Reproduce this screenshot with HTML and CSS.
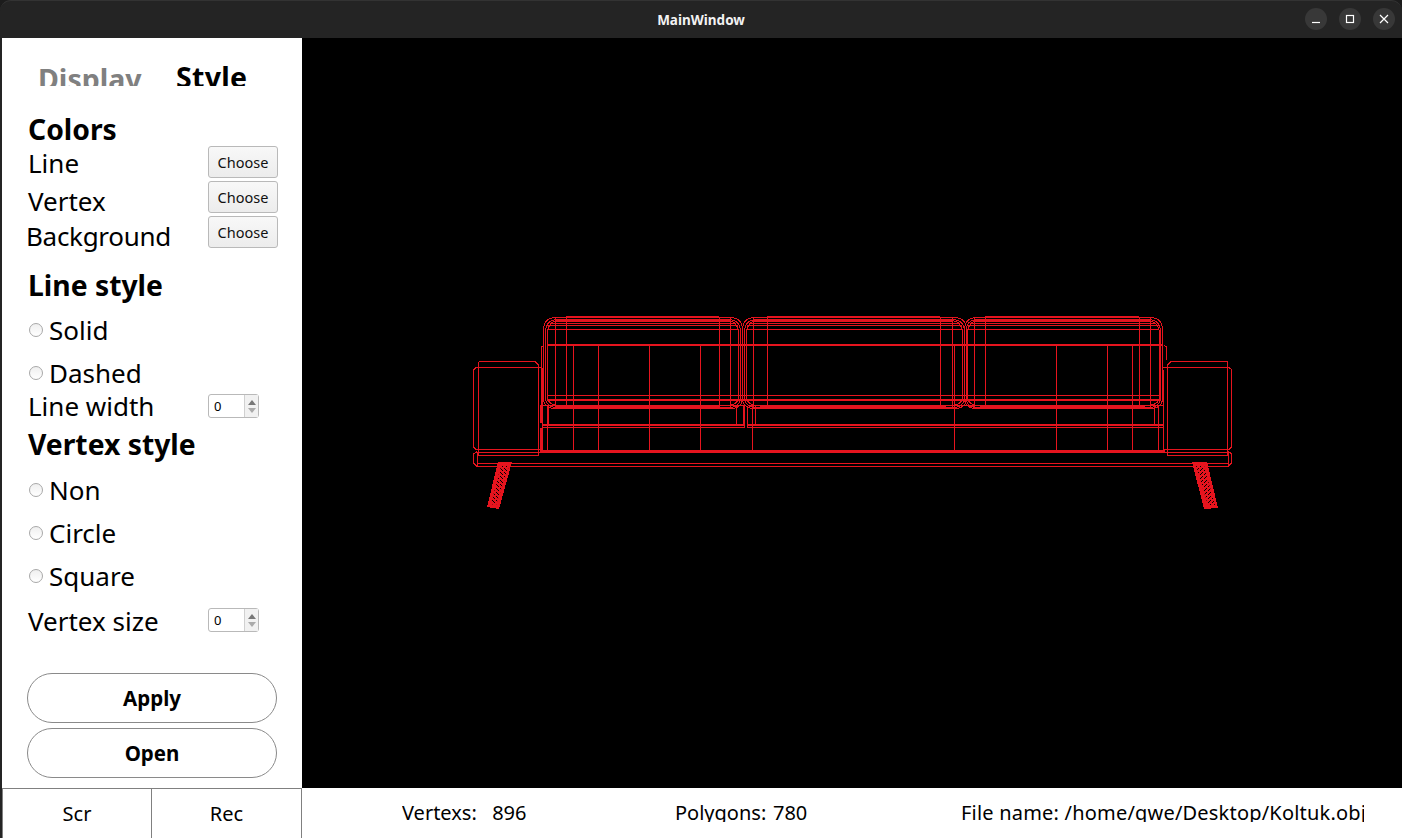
FILE: index.html
```html
<!DOCTYPE html>
<html lang="en">
<head>
<meta charset="utf-8">
<title>MainWindow</title>
<link rel="stylesheet" href="styles.css">
</head>
<body>
<div class="window">
  <header class="titlebar">
    <span class="title">MainWindow</span>
    <div class="wm">
      <span class="wm-btn"><svg width="12" height="12" viewBox="0 0 12 12"><path class="wm-ico" d="M2 9.5H10"/></svg></span>
      <span class="wm-btn"><svg width="12" height="12" viewBox="0 0 12 12"><rect class="wm-ico" x="2.5" y="2.5" width="7" height="7"/></svg></span>
      <span class="wm-btn"><svg width="12" height="12" viewBox="0 0 12 12"><path class="wm-ico" d="M2 2L10 10M10 2L2 10"/></svg></span>
    </div>
  </header>
  <main class="body">
    <aside class="panel">
      <div class="tabs">
        <span class="tab tab-off">Display</span>
        <span class="tab tab-on">Style</span>
      </div>
      <h2 class="heading">Colors</h2>
      <div class="row row-color"><span class="label l-1">Line</span><button class="choose">Choose</button></div>
      <div class="row row-color"><span class="label l-4">Vertex</span><button class="choose">Choose</button></div>
      <div class="row row-color"><span class="label l-4 l-out">Background</span><button class="choose">Choose</button></div>
      <h2 class="heading h-line">Line style</h2>
      <div class="radio m-11"><i class="dot"></i><span class="label">Solid</span></div>
      <div class="radio m-9"><i class="dot"></i><span class="label">Dashed</span></div>
      <div class="row row-spin"><span class="label">Line width</span><div class="spin"><span class="spin-val">0</span><span class="spin-btns"><i class="up"></i><i class="down"></i></span></div></div>
      <h2 class="heading h-vertex">Vertex style</h2>
      <div class="radio m-12"><i class="dot"></i><span class="label">Non</span></div>
      <div class="radio m-9"><i class="dot"></i><span class="label">Circle</span></div>
      <div class="radio m-9"><i class="dot"></i><span class="label">Square</span></div>
      <div class="row row-spin m-11"><span class="label l-low">Vertex size</span><div class="spin"><span class="spin-val">0</span><span class="spin-btns"><i class="up"></i><i class="down"></i></span></div></div>
      <button class="pill pill-apply">Apply</button>
      <button class="pill pill-open">Open</button>
    </aside>
    <section class="canvas">
      <svg class="model" viewBox="302 38 1100 750" aria-label="Sofa wireframe">
        <defs>
          <pattern id="hatch-l" width="4" height="4" patternUnits="userSpaceOnUse"><path class="tick" d="M0 0L3 3"/></pattern>
          <pattern id="hatch-r" width="4" height="4" patternUnits="userSpaceOnUse"><path class="tick" d="M3 0L0 3"/></pattern>
        </defs>
        <!-- armrests -->
        <path class="w" d="M473.5 370L476 367.5H542M473.5 370V447L476 449.5H542V370"/>
        <path class="w" d="M478.5 361.5H535L538.5 365V455.5H478.5V361.5"/>
        <path class="w" d="M476 452.5H540"/>
        <path class="w" d="M1232 370L1229 367.5H1163M1231.5 370V447L1229 449.5H1163V370"/>
        <path class="w" d="M1227.5 361.5H1171L1167.5 365V455.5H1227.5V361.5"/>
        <path class="w" d="M1165 452.5H1231"/>
        <!-- back frame -->
        <path class="w" d="M541.5 368V347L544 345M1166.5 360V347L1164 345"/>
        <path class="b2" d="M542 368V405M541 405V423M541 428V451"/>
        <!-- cushions -->
        <path class="w" d="M543.5 398V330Q543.5 317.5 556 317.5H730Q742.5 317.5 742.5 330V398Q742.5 408.5 730 408.5H556Q543.5 408.5 543.5 398Z"/>
        <path class="w" d="M545.5 397V332Q545.5 319.5 558 319.5H728Q740.5 319.5 740.5 332V397Q740.5 407.5 728 407.5H558Q545.5 407.5 545.5 397Z"/>
        <path class="w" d="M547.5 396V334Q547.5 320.5 560 320.5H726Q738.5 320.5 738.5 334V396Q738.5 405.5 726 405.5H560Q547.5 405.5 547.5 396Z"/>
        <path class="w" d="M555.5 317V408M566.5 317V408M719.5 317V408M730.5 317V408"/>
        <path class="w" d="M742.5 398V330Q742.5 317.5 755 317.5H954Q966.5 317.5 966.5 330V398Q966.5 408.5 954 408.5H755Q742.5 408.5 742.5 398Z"/>
        <path class="w" d="M744.5 397V332Q744.5 319.5 757 319.5H952Q964.5 319.5 964.5 332V397Q964.5 407.5 952 407.5H757Q744.5 407.5 744.5 397Z"/>
        <path class="w" d="M746.5 396V334Q746.5 320.5 759 320.5H950Q962.5 320.5 962.5 334V396Q962.5 405.5 950 405.5H759Q746.5 405.5 746.5 396Z"/>
        <path class="w" d="M753.5 317V408M767.5 317V408M940.5 317V408M952.5 317V408"/>
        <path class="w" d="M964.5 398V330Q964.5 317.5 977 317.5H1150Q1162.5 317.5 1162.5 330V398Q1162.5 408.5 1150 408.5H977Q964.5 408.5 964.5 398Z"/>
        <path class="w" d="M966 397V332Q966 319.5 978 319.5H1148Q1160.5 319.5 1160.5 332V397Q1160.5 407.5 1148 407.5H978Q966 407.5 966 397Z"/>
        <path class="w" d="M967.5 396V334Q967.5 320.5 980 320.5H1146Q1159.5 320.5 1159.5 334V396Q1159.5 405.5 1146 405.5H980Q967.5 405.5 967.5 396Z"/>
        <path class="w" d="M974.5 317V408M985.5 317V408M1139.5 317V408M1150.5 317V408"/>
        <!-- cushion horizontals -->
        <path class="b2" d="M566 317H719M767 317H940M985 317H1139"/>
        <path class="b3" d="M555 320H730M753 320H952M974 320H1150"/>
        <path class="w" d="M550 323.5H736M750 323.5H958M971 323.5H1155M547 325.5H738M747 325.5H962M968 325.5H1159M547 329.5H738M747 329.5H962M968 329.5H1159"/>
        <path class="b2" d="M547 345H1162"/>
        <path class="w" d="M547 395.5H1160"/>
        <path class="b2" d="M547 400H1160"/>
        <path class="b4" d="M555 407H720M760 407H946M980 407H1145"/>
        <!-- seat -->
        <path class="w" d="M543 405.5H744.5V427.5H543M747.5 405.5H1163V427.5H747.5V405.5"/>
        <path class="b2" d="M543 425H744M747 425H1163"/>
        <path class="w" d="M548.5 405V425M736.5 405V425M743.5 405V425M752.5 405V425M755.5 405V425M1154.5 405V425M1158.5 405V425"/>
        <!-- lower verticals -->
        <path class="w" d="M573.5 345V451M598.5 345V451M649.5 345V451M700.5 345V451M752.5 425V451M954.5 345V451M1056.5 345V451M1107.5 345V451M1132.5 345V451M547.5 405V451M1158.5 425V451"/>
        <!-- base -->
        <path class="b3" d="M540 451.5H1165"/>
        <path class="w" d="M477 451.5L473.5 454V463L477 466.5H1228L1231.5 463V454L1228 451.5M477 463.5H1228M477 451.5V466M1228 451.5V466"/>
        <!-- legs -->
        <path class="leg" d="M498 462H512L499 509L487 507Z"/>
        <path class="hatch-l" d="M501 466H509L496 505L491 504Z"/>
        <path class="leg" d="M1192 462H1207L1218 508L1204 509Z"/>
        <path class="hatch-r" d="M1196 466H1204L1215 505L1208 505Z"/>
      </svg>
    </section>
  </main>
  <footer class="status">
    <div class="shots">
      <button class="shot shot-scr">Scr</button>
      <button class="shot shot-last">Rec</button>
    </div>
    <div class="stat stat-v">Vertexs:&nbsp; 896</div>
    <div class="stat stat-p">Polygons: 780</div>
    <div class="stat stat-f">File name: /home/qwe/Desktop/Koltuk.obj</div>
  </footer>
</div>
</body>
</html>
```
FILE: styles.css
```css
* { box-sizing: border-box; }
html, body { margin: 0; padding: 0; height: 100%; background: #1c1c1c; overflow: hidden; }
body { font-family: "Noto Sans", "Open Sans", sans-serif; color: #000; }
.window { width: 1402px; height: 838px; display: flex; flex-direction: column; padding-left: 2px; background: #242424; border-radius: 11px 11px 0 0; border-top: 1px solid #333; }

.titlebar { height: 37px; flex: none; margin-left: -2px; display: flex; align-items: center; justify-content: center; position: relative; }
.title { color: #f2f2f2; font-size: 13.5px; font-weight: 700; }
.wm { position: absolute; right: 7px; top: 7px; display: flex; gap: 12px; }
.wm-btn { width: 22px; height: 22px; border-radius: 50%; background: #383838; display: flex; align-items: center; justify-content: center; }
.wm-ico { fill: none; stroke: #fff; stroke-width: 1.2; }

.body { flex: 1; display: flex; min-height: 0; }
.panel { width: 300px; flex: none; background: #fff; display: flex; flex-direction: column; padding-left: 26px; }

.tabs { height: 74px; flex: none; display: flex; padding-top: 20px; margin-left: 10px; }
.tab { font-size: 28.5px; font-weight: 700; line-height: 38px; height: 28px; overflow: hidden; }
.tab-off { color: #808080; width: 138px; padding-top: 2px; }
.tab-on { color: #000; letter-spacing: 0.3px; }

.heading { margin: 0; font-size: 28.3px; font-weight: 700; line-height: 34px; height: 34px; }
.h-line { margin-top: 17px; }
.h-vertex { margin-top: 5px; }

.label { font-size: 26px; line-height: 32px; white-space: nowrap; display: block; }
.l-1 { margin-top: 1px; }
.l-4 { margin-top: 4px; }
.l-out { margin-left: -2px; letter-spacing: -0.3px; }

.row { display: flex; justify-content: space-between; }
.row-color { height: 35px; width: 250px; align-items: flex-start; }
.row-spin { height: 32px; width: 231px; align-items: center; }
.m-9 { margin-top: 9px; }
.m-11 { margin-top: 11px; }
.m-12 { margin-top: 12px; }

.choose { width: 70px; height: 32px; padding: 0; font: 14.5px "Noto Sans", sans-serif; color: #111; border: 1px solid #b9b9b9; border-radius: 3px; background: linear-gradient(#f8f8f8, #ececec); }

.radio { height: 34px; display: flex; align-items: center; gap: 6px; padding-left: 1px; }
.radio .label { margin-top: -1px; }
.dot { width: 14px; height: 14px; border-radius: 50%; border: 1px solid #a8a8a8; background: linear-gradient(#efefef, #fff); flex: none; }
.row-spin .label { margin-top: -1px; }
.row-spin .l-low { margin-top: 1px; }

.spin { width: 51px; height: 24px; border: 1px solid #b9b9b9; border-radius: 3px; display: flex; background: #fff; }
.spin-val { flex: 1; font-size: 13px; line-height: 22px; padding-left: 5px; }
.spin-btns { width: 14px; border-left: 1px solid #d0d0d0; background: #f1f1f1; display: flex; flex-direction: column; align-items: center; justify-content: center; gap: 3px; }
.up { border: 4px solid transparent; border-top: 0; border-bottom: 5px solid #777; }
.down { border: 4px solid transparent; border-bottom: 0; border-top: 5px solid #aaa; }

.pill { width: 250px; height: 50px; flex: none; margin-left: -1px; border: 1px solid #8a8a8a; border-radius: 25px; background: #fff; font: 700 20.5px "Noto Sans", sans-serif; color: #000; padding: 0; }
.pill-apply { margin-top: 37px; }
.pill-open { margin-top: 5px; }

.canvas { flex: 1; background: #000; min-width: 0; }
.model { display: block; width: 100%; height: 100%; }
.w, .b2, .b3, .b4 { fill: none; stroke: #e6141e; shape-rendering: crispEdges; }
.w { stroke-width: 1; }
.b2 { stroke-width: 2; }
.b3 { stroke-width: 3; }
.b4 { stroke-width: 4; }
.leg { fill: #e6141e; shape-rendering: crispEdges; }
.hatch-l { fill: url(#hatch-l); }
.hatch-r { fill: url(#hatch-r); }
.tick { fill: none; stroke: #000; stroke-width: 1; }

.status { height: 50px; flex: none; display: flex; background: #fff; }
.shots { width: 300px; flex: none; display: flex; }
.shot { height: 50px; padding: 0; background: #fff; border: 1px solid #808080; border-right: 0; border-bottom: 0; font: 20px "Noto Sans", sans-serif; color: #000; }
.shot-scr { width: 149px; }
.shot-last { width: 151px; border-right: 1px solid #808080; }
.stat { font-size: 20px; line-height: 26px; height: 22px; margin-top: 12px; overflow: hidden; white-space: nowrap; flex: none; }
.stat-v { margin-left: 100px; width: 273px; word-spacing: 2.5px; }
.stat-p { width: 287px; word-spacing: 1.5px; }
.stat-f { width: 403px; letter-spacing: 0.2px; margin-left: -1px; }
```
